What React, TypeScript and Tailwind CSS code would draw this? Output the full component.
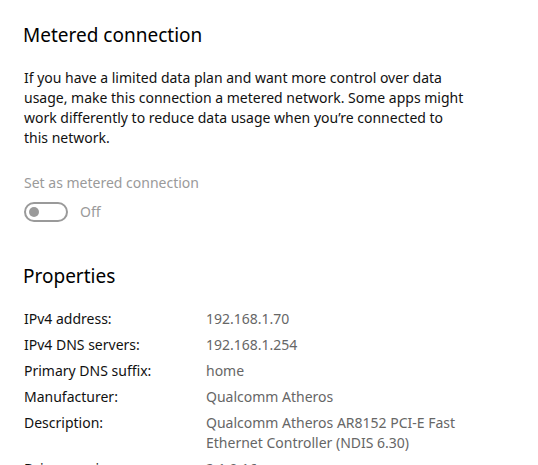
import React from 'react';

const properties: { label: string; value: string[] }[] = [
  { label: 'IPv4 address:', value: ['192.168.1.70'] },
  { label: 'IPv4 DNS servers:', value: ['192.168.1.254'] },
  { label: 'Primary DNS suffix:', value: ['home'] },
  { label: 'Manufacturer:', value: ['Qualcomm Atheros'] },
  { label: 'Description:', value: ['Qualcomm Atheros AR8152 PCI-E Fast', 'Ethernet Controller (NDIS 6.30)'] },
  { label: 'Driver version:', value: ['2.1.0.16'] },
];

const App: React.FC = () => {
  return (
    <div className="h-[465px] w-[538px] overflow-hidden bg-white px-6 pt-[21px] font-['Noto_Sans',sans-serif] text-[14px] text-[#111111]">
      {/* Metered connection */}
      <h2 className="ml-[-1px] text-[19px] leading-[28px] font-normal text-black">Metered connection</h2>
      <p className="mt-[19px] w-[443px] leading-[20px]">
        If you have a limited data plan and want more control over data usage, make this connection a metered network. Some apps might work differently to reduce data usage when you’re connected to this network.
      </p>

      <div className="mt-[25px] leading-[20px] text-[#9a9a9a]">Set as metered connection</div>
      <div className="mt-[9px] flex items-center gap-3">
        <div className="flex h-5 w-11 items-center rounded-full border-2 border-[#9a9a9a] px-[3px]">
          <div className="h-[10px] w-[10px] rounded-full bg-[#9a9a9a]" />
        </div>
        <span className="leading-[20px] text-[#9a9a9a]">Off</span>
      </div>

      {/* Properties */}
      <h2 className="ml-[-1px] mt-10 text-[19px] leading-[28px] font-normal text-black">Properties</h2>
      <div className="mt-[19px] flex flex-col gap-[6px]">
        {properties.map((p) => (
          <div key={p.label} className="flex leading-[20px]">
            <div className="w-[182px] shrink-0">{p.label}</div>
            <div className="text-[#666666]">
              {p.value.map((v) => (
                <div key={v}>{v}</div>
              ))}
            </div>
          </div>
        ))}
      </div>
    </div>
  );
};

export default App;
